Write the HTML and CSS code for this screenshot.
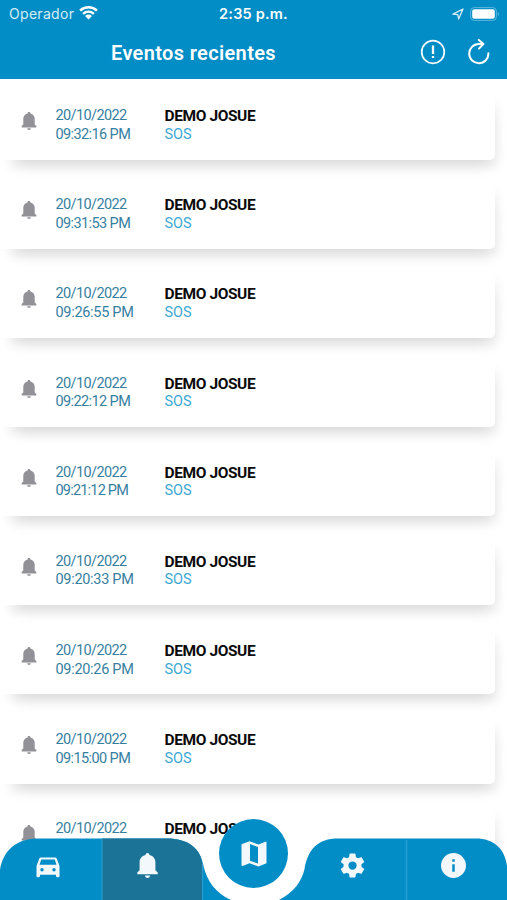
FILE: index.html
```html
<!DOCTYPE html>
<html lang="es">
<head>
    <meta charset="UTF-8">
    <meta name="viewport" content="width=device-width, initial-scale=1.0">
    <title>Eventos recientes</title>
    <link rel="stylesheet" href="styles.css">
</head>
<body>
    <header class="header">
        <div class="status-bar">
            <div class="carrier">
                <span>Operador</span>
                <svg class="wifi" viewBox="0 0 18 14">
                    <path d="M1 5.2a11.6 11.6 0 0 1 16 0M3.9 8.2a7.4 7.4 0 0 1 10.2 0" fill="none" stroke="#fff" stroke-width="2.3"/>
                    <path d="M9 13.6 5.8 10.3a4.6 4.6 0 0 1 6.4 0z" fill="#fff"/>
                </svg>
            </div>
            <div class="clock">2:35 p.m.</div>
            <div class="indicators">
                <svg class="location" viewBox="0 0 12 12">
                    <path d="M1 6.2 11 1 6.6 11 5.8 6.6z" fill="none" stroke="#d5edf7" stroke-width="1.3" stroke-linejoin="round"/>
                </svg>
                <svg class="battery" viewBox="0 0 30 14">
                    <rect x=".6" y=".6" width="25.8" height="12.8" rx="3.6" fill="none" stroke="#5fb6dc" stroke-width="1"/>
                    <rect x="2.2" y="2.2" width="22.6" height="9.6" rx="2" fill="#fff"/>
                    <path d="M27.8 5v4c1.6-.6 1.6-3.4 0-4z" fill="#5fb6dc"/>
                </svg>
            </div>
        </div>
        <div class="title-bar">
            <h1>Eventos recientes</h1>
            <div class="actions">
                <svg class="alert" viewBox="0 0 26 26" fill="none" stroke="#fff">
                    <circle cx="13" cy="13" r="11.3" stroke-width="1.7"/>
                    <path d="M13 6.6v8.4M13 17v2" stroke-width="2.3"/>
                </svg>
                <svg class="reload" viewBox="0 0 24 26" fill="none" stroke="#fff" stroke-width="2" stroke-linecap="round" stroke-linejoin="round">
                    <path d="M21.400 14.300a9.600 9.600 0 1 1-9.600-9.300h4.400M11.800 .9l4.600 4.100-4.400 4.600"/>
                </svg>
            </div>
        </div>
    </header>

    <!-- Bell used by the list and the tab bar -->
    <svg class="symbols">
        <symbol id="bell" viewBox="0 0 20 24">
            <path d="M10 0c1.200 0 1.800.7 1.900 1.900C15.600 2.700 17.600 5.500 17.600 9v7.500l2.200 2.300v1.700H.2v-1.700l2.200-2.300V9C2.400 5.500 4.400 2.700 8.100 1.900 8.200.7 8.800 0 10 0zM7.600 21.700h4.800c0 1.400-1 2.300-2.400 2.300s-2.400-.9-2.400-2.300z"/>
        </symbol>
    </svg>

    <main class="events">
        <article class="event">
            <svg class="event-icon"><use href="#bell"/></svg>
            <div class="event-date">20/10/2022<br><span class="event-time">09:32:16 PM</span></div>
            <div class="event-info"><strong>DEMO JOSUE</strong><span>SOS</span></div>
        </article>
        <article class="event">
            <svg class="event-icon"><use href="#bell"/></svg>
            <div class="event-date">20/10/2022<br><span class="event-time">09:31:53 PM</span></div>
            <div class="event-info"><strong>DEMO JOSUE</strong><span>SOS</span></div>
        </article>
        <article class="event">
            <svg class="event-icon"><use href="#bell"/></svg>
            <div class="event-date">20/10/2022<br><span class="event-time wide">09:26:55 PM</span></div>
            <div class="event-info"><strong>DEMO JOSUE</strong><span>SOS</span></div>
        </article>
        <article class="event">
            <svg class="event-icon"><use href="#bell"/></svg>
            <div class="event-date">20/10/2022<br><span class="event-time">09:22:12 PM</span></div>
            <div class="event-info"><strong>DEMO JOSUE</strong><span>SOS</span></div>
        </article>
        <article class="event">
            <svg class="event-icon"><use href="#bell"/></svg>
            <div class="event-date">20/10/2022<br><span class="event-time narrow">09:21:12 PM</span></div>
            <div class="event-info"><strong>DEMO JOSUE</strong><span>SOS</span></div>
        </article>
        <article class="event">
            <svg class="event-icon"><use href="#bell"/></svg>
            <div class="event-date">20/10/2022<br><span class="event-time wide">09:20:33 PM</span></div>
            <div class="event-info"><strong>DEMO JOSUE</strong><span>SOS</span></div>
        </article>
        <article class="event">
            <svg class="event-icon"><use href="#bell"/></svg>
            <div class="event-date">20/10/2022<br><span class="event-time wide">09:20:26 PM</span></div>
            <div class="event-info"><strong>DEMO JOSUE</strong><span>SOS</span></div>
        </article>
        <article class="event">
            <svg class="event-icon"><use href="#bell"/></svg>
            <div class="event-date">20/10/2022<br><span class="event-time">09:15:00 PM</span></div>
            <div class="event-info"><strong>DEMO JOSUE</strong><span>SOS</span></div>
        </article>
        <article class="event event-last">
            <svg class="event-icon"><use href="#bell"/></svg>
            <div class="event-date">20/10/2022</div>
            <div class="event-info"><strong>DEMO JOSUE</strong></div>
        </article>
    </main>

    <nav class="tab-bar">
        <svg class="tab-shape" viewBox="0 0 507 82">
            <path d="M0 82V52C3 32 17 20.500 38 20.500H167C188 20.500 200 30 203 46C207 64 216 75 231 82z" fill="#028dc6"/>
            <path d="M102 82V20.500H167C188 20.500 201 31 202 46V82z" fill="#1b7397"/>
            <path d="M102 21v61M202.500 46v36" stroke="#2a9fd2" fill="none"/>
            <path d="M279 82C295 74 302 62 304.500 51C308 31 318 20.500 338 20.500H476C494 20.500 505 31 507 48V82z" fill="#028dc6"/>
            <path d="M406.500 22v60" stroke="#299fd2" stroke-width="1.500"/>
        </svg>
        <div class="tabs">
            <a class="tab">
                <svg class="car" viewBox="0 0 24 21"><path fill-rule="evenodd" d="M5 .5h14c.9 0 1.500.500 1.800 1.300L23.500 9v10c0 .7-.4 1.200-1.100 1.200h-1.200c-.7 0-1.200-.5-1.200-1.200v-1.200H4V19c0 .7-.5 1.200-1.200 1.200H1.600C.9 20.200.5 19.700.5 19V9l2.700-7.200C3.500 1 4.100.5 5 .5zM5.300 2.600 3.500 7.700h17l-1.800-5.100zM6 11a1.700 1.700 0 1 0 0 3.400A1.700 1.700 0 0 0 6 11zm12 0a1.700 1.700 0 1 0 0 3.400 1.700 1.700 0 0 0 0-3.400z"/></svg>
            </a>
            <a class="tab"><svg class="bell"><use href="#bell"/></svg></a>
            <a class="tab tab-map">
                <span class="map-button">
                    <svg class="map" viewBox="0 0 26 26"><path fill-rule="evenodd" d="m.5 3.200 8-3 9 3.200 6.800-2.600c.7-.2 1.200 0 1.200.7v20.800l-8 3.200-9-3.200-6.800 2.600c-.7.200-1.200 0-1.200-.7zM9 3.100v16.700l8 2.800V5.900z"/></svg>
                </span>
            </a>
            <a class="tab">
                <svg class="gear" viewBox="2 2 20 20"><path d="M19.140 12.940c.04-.3.060-.61.060-.94s-.02-.64-.07-.94l2.030-1.580a.49.49 0 0 0 .12-.61l-1.920-3.320a.49.49 0 0 0-.59-.22l-2.390.96a7 7 0 0 0-1.620-.94l-.36-2.540a.48.48 0 0 0-.48-.41h-3.840a.48.48 0 0 0-.47.41l-.36 2.540c-.59.24-1.130.57-1.620.94l-2.390-.96a.48.48 0 0 0-.59.22L2.740 8.870a.48.48 0 0 0 .12.61l2.030 1.580c-.05.3-.09.63-.09.94s.02.64.07.94l-2.030 1.580a.49.49 0 0 0-.12.61l1.920 3.320c.12.22.37.290.59.22l2.390-.96c.5.38 1.030.7 1.620.94l.36 2.540c.05.24.24.41.48.41h3.840c.24 0 .44-.17.47-.41l.36-2.540a7 7 0 0 0 1.620-.94l2.390.96c.22.08.47 0 .59-.22l1.920-3.320a.48.48 0 0 0-.12-.61zM12 15.300a3.300 3.300 0 1 1 0-6.600 3.300 3.300 0 0 1 0 6.600z"/></svg>
            </a>
            <a class="tab">
                <svg class="info" viewBox="2 2 20 20"><path fill-rule="evenodd" d="M12 2a10 10 0 1 0 0 20 10 10 0 0 0 0-20zm1 15h-2v-6h2zm0-8h-2V7h2z"/></svg>
            </a>
        </div>
    </nav>
</body>
</html>
```
FILE: styles.css
```css
/* Global settings */
:root {
    --color-primary: #028dc6;
    --color-date: #36809f;
    --color-sos: #3ba8d4;
    --font-default: Roboto, "Liberation Sans", sans-serif;
}

* {
    box-sizing: border-box;
}

body {
    margin: 0;
    height: 900px;
    overflow: hidden;
    background: #fff;
    font-family: var(--font-default);
}

svg {
    display: block;
}

.symbols {
    position: absolute;
    width: 0;
    height: 0;
}

/* Header */
.header {
    height: 79px;
    background: var(--color-primary);
    color: #fff;
}

.status-bar {
    display: grid;
    grid-template-columns: 1fr auto 1fr;
    align-items: center;
    height: 27px;
    padding: 0 7px 0 9px;
    font-family: Inter, sans-serif;
    font-size: 14px;
}

.carrier {
    display: flex;
    align-items: center;
    gap: 5px;
    color: #d5edf7;
    letter-spacing: 0.3px;
}

.wifi {
    width: 19px;
    height: 15px;
    margin-top: -2px;
}

.clock {
    margin-left: -2px;
    font-weight: 600;
    font-size: 14.5px;
    letter-spacing: 0.2px;
}

.indicators {
    display: flex;
    justify-content: flex-end;
    align-items: center;
    gap: 6px;
}

.location {
    width: 12px;
    height: 12px;
}

.battery {
    width: 30px;
    height: 14px;
}

.title-bar {
    display: flex;
    align-items: center;
    justify-content: space-between;
    height: 52px;
    padding: 0 16px 0 111px;
}

h1 {
    margin: 0;
    font-size: 20px;
    font-weight: 600;
    letter-spacing: 0.35px;
    white-space: nowrap;
}

.actions {
    display: flex;
    align-items: center;
    gap: 21px;
}

.alert {
    width: 26px;
    height: 26px;
    margin-top: -2px;
}

.reload {
    width: 24px;
    height: 26px;
    margin-top: -2px;
}

/* Event list */
.events {
    display: flex;
    flex-direction: column;
    gap: 18px;
    padding: 9.500px 12px 0 0;
}

.event {
    display: flex;
    flex: none;
    height: 71.150px;
    padding: 18.700px 0 0 21px;
    background: #fff;
    border-radius: 0 0 5px 0;
    box-shadow: 6px 14px 14px -9px rgba(0, 0, 0, 0.13), 6px 10px 10px -2px rgba(0, 0, 0, 0.03);
    font-size: 14.5px;
    line-height: 18.500px;
    white-space: nowrap;
}

/* Runs on below the tab bar */
.event-last {
    height: 110px;
}

.event-icon {
    width: 16px;
    height: 18px;
    margin-top: 5px;
    fill: #919197;
}

.event-date {
    width: 109px;
    margin-left: 18.500px;
    color: var(--color-date);
    letter-spacing: -0.6px;
}

.event-time {
    letter-spacing: -0.6px;
}

.event-time.wide {
    letter-spacing: -0.3px;
}

.event-time.narrow {
    letter-spacing: -0.8px;
}

.event-info {
    display: flex;
    flex-direction: column;
    color: var(--color-sos);
}

.event-info strong {
    color: #0b0b0b;
    font-size: 15.5px;
    letter-spacing: -0.4px;
}

/* Bottom tab bar */
.tab-bar {
    position: fixed;
    left: 0;
    bottom: 0;
    width: 507px;
    height: 82px;
}

.tab-shape {
    position: absolute;
    top: 0;
    left: 0;
    width: 507px;
    height: 82px;
}

.tabs {
    position: relative;
    display: grid;
    grid-template-columns: 95px 104px 109px 89px 112px;
    height: 82px;
}

.tab {
    display: flex;
    justify-content: center;
    padding-top: 35px;
    fill: #f2f8fb;
}

.tab-map {
    padding-top: 1px;
}

.map-button {
    display: flex;
    align-items: center;
    justify-content: center;
    width: 69px;
    height: 69px;
    border-radius: 50%;
    background: var(--color-primary);
}

.car {
    width: 24px;
    height: 21px;
    margin-top: 4px;
}

.bell {
    width: 21px;
    height: 25px;
}

.map {
    width: 26px;
    height: 26px;
}

.gear,
.info {
    width: 25px;
    height: 25px;
}
```
